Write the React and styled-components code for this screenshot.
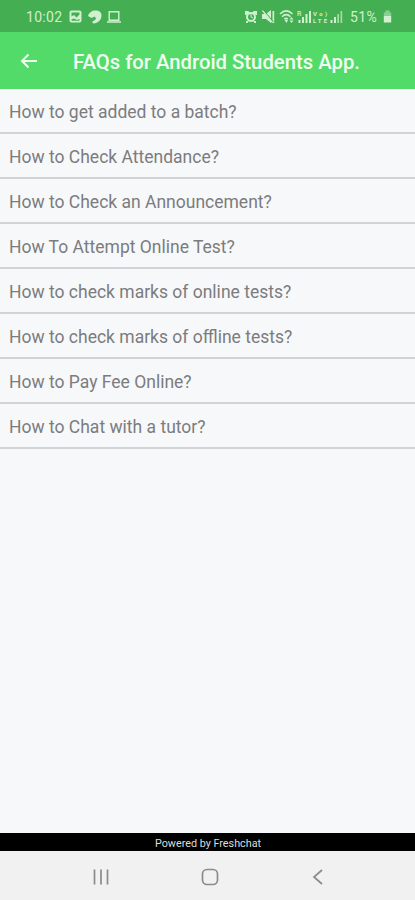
import React from 'react'
import styled, { createGlobalStyle } from 'styled-components'

const questions = [
  'How to get added to a batch?',
  'How to Check Attendance?',
  'How to Check an Announcement?',
  'How To Attempt Online Test?',
  'How to check marks of online tests?',
  'How to check marks of offline tests?',
  'How to Pay Fee Online?',
  'How to Chat with a tutor?',
]

const App = () => {
  return (
    <Screen>
      <GlobalStyle />
      <StatusBar>
        <Clock>10:02</Clock>
        <LeftIcons viewBox="0 0 56 20">
          {/* picture */}
          <path fillRule="evenodd" d="M3.500 3.500h8a2 2 0 0 1 2 2v8a2 2 0 0 1-2 2h-8a2 2 0 0 1-2-2v-8a2 2 0 0 1 2-2zM3.500 5.500v4l2.500-1.500 2.500 2.500 3-3v-2zM3.500 12.500v1.200h8v-1.700l-2.500 1-3-1.500z" />
          {/* helmet */}
          <path d="M20 9c1-3.500 4-5.500 7.500-5.500 4 0 6 2 6 5 0 4.500-3.500 7.500-8 8L24 15l4-3-1-2.500-3.500 1.500z" />
          {/* laptop */}
          <path fillRule="evenodd" d="M40.500 4h11v10h-11zM41.900 5.400v7.200h8.200V5.400zM39 14.300h14v1.500H39z" />
        </LeftIcons>
        <RightIcons viewBox="0 0 100 20">
          {/* alarm */}
          <circle cx="7" cy="10" r="4" fill="none" stroke="currentColor" strokeWidth="2" />
          <path d="M1 4h3.500l1 2L2 8H1zM13 4H9.500l-1 2L12 8h1zM2 14l3 0-1.500 2H2zM12 14H9l1.500 2H12z" />
          <path d="M7 7v3l2 1" fill="none" stroke="currentColor" />
          {/* muted speaker */}
          <path d="M18 7h4l5-4v13l-5-4h-4zM28.500 4h1.700v12h-1.700z" />
          <path d="M18.500 3.500l10 12" fill="none" stroke="currentColor" strokeWidth="1.300" />
          <path d="M19.500 3l10 12" fill="none" stroke="#43ae52" />
          {/* wifi */}
          <path d="M36 7c4-4 8.500-4 12.500 0M38 9.700c3-3 5.500-3 8.500 0M40.300 12.200c1.200-1 2.400-1 3.600 0" fill="none" stroke="currentColor" strokeWidth="1.600" />
          <path d="M40.500 13l2 3 1.500-3zM45.500 12.500l2-2.500 2 2.500zM45.500 13.500h4l-2 2.500z" />
          {/* roaming signal */}
          <path d="M54.500 13h2v3h-2zM58 10h2v6h-2zM61.500 7h2v9h-2zM65 4h2v12h-2z" />
          <text x="53" y="9" fontSize="7" fontWeight="500">R</text>
          <text x="69" y="8.500" fontSize="6" fontWeight="700" textLength="14">Vo)</text>
          <text x="69" y="16" fontSize="6" fontWeight="700" textLength="14">LTE</text>
          {/* second signal */}
          <path d="M86.500 13h2v3h-2zM90 10h2v6h-2z" />
          <path d="M93.300 7h1.700v9h-1.700zM96.500 4h1.700v12h-1.700z" opacity=".7" />
        </RightIcons>
        <Percent>51%</Percent>
        <Battery viewBox="0 0 10 16">
          <path d="M3.500 1.500h4v2h1.700V7H1.800V3.500h1.700z" opacity=".5" />
          <path d="M1.800 7h7.400v6.500H1.800z" />
        </Battery>
      </StatusBar>
      <Header>
        <BackArrow viewBox="0 0 18 16">
          <path d="M17 8H2M8.500 1.500L2 8l6.500 6.500" />
        </BackArrow>
        <Title>FAQs for Android Students App.</Title>
      </Header>
      <List>
        {questions.map((question) => (
          <Question key={question}>{question}</Question>
        ))}
      </List>
      <PoweredBy>Powered by Freshchat</PoweredBy>
      <NavBar>
        <NavIcon viewBox="0 0 18 18">
          <path d="M2.500 1.500v15M9 1.500v15M15.500 1.500v15" />
        </NavIcon>
        <NavIcon viewBox="0 0 18 18">
          <rect x="1.500" y="1.500" width="15" height="15" rx="4.500" />
        </NavIcon>
        <NavIcon viewBox="0 0 18 18">
          <path d="M13 2L5 9l8 7" />
        </NavIcon>
      </NavBar>
    </Screen>
  )
}

const GlobalStyle = createGlobalStyle`
  body {
    margin: 0;
    font-family: Roboto, "Liberation Sans", sans-serif;
  }
`;

const Screen = styled.div`
  display: flex;
  flex-direction: column;
  height: 900px;
  overflow: hidden;
  background-color: #f7f8fa;
`;

const StatusBar = styled.div`
  height: 32px;
  flex-shrink: 0;
  display: flex;
  align-items: center;
  box-sizing: border-box;
  padding: 1px 23px 0 26px;
  background-color: #43ae52;
  color: #d0f0cf;
`;

const Clock = styled.span`
  width: 42px;
  font-size: 14px;
  letter-spacing: 0.3px;
`;

const LeftIcons = styled.svg`
  width: 56px;
  height: 20px;
  fill: currentColor;
`;

const RightIcons = styled.svg`
  width: 100px;
  height: 20px;
  margin-left: auto;
  fill: currentColor;
`;

const Percent = styled.span`
  width: 32px;
  margin-left: 6px;
  font-size: 14px;
  letter-spacing: 0.4px;
`;

const Battery = styled.svg`
  width: 10px;
  height: 16px;
  fill: currentColor;
`;

const Header = styled.header`
  height: 57px;
  flex-shrink: 0;
  display: flex;
  align-items: center;
  box-sizing: border-box;
  padding: 1px 0 0 20px;
  background-color: #53db69;
  color: #f0fff0;
`;

const BackArrow = styled.svg`
  width: 18px;
  height: 16px;
  margin-right: 35px;
  fill: none;
  stroke: currentColor;
  stroke-width: 2;
`;

const Title = styled.h1`
  margin: 0;
  padding-top: 2px;
  font-size: 20.3px;
  font-weight: 500;
  line-height: 24px;
  white-space: nowrap;
`;

const List = styled.ul`
  flex: 1;
  margin: 0;
  padding: 0;
  list-style: none;
`;

const Question = styled.li`
  height: 45px;
  box-sizing: border-box;
  padding-left: 9px;
  border-bottom: 2px solid #d2d3d5;
  color: #7b7c7e;
  font-size: 17.5px;
  line-height: 47px;
  white-space: nowrap;
`;

const PoweredBy = styled.div`
  height: 18px;
  flex-shrink: 0;
  background-color: #000;
  color: #ddd;
  font-size: 10.8px;
  line-height: 21px;
  text-indent: 1px;
  text-align: center;
`;

const NavBar = styled.nav`
  height: 49px;
  flex-shrink: 0;
  display: flex;
  align-items: center;
  justify-content: space-between;
  box-sizing: border-box;
  padding: 2px 88px 0 92px;
  background-color: #f1f1f1;
`;

const NavIcon = styled.svg`
  width: 18px;
  height: 18px;
  fill: none;
  stroke: #8b8b8b;
  stroke-width: 1.7;
`;

export default App
